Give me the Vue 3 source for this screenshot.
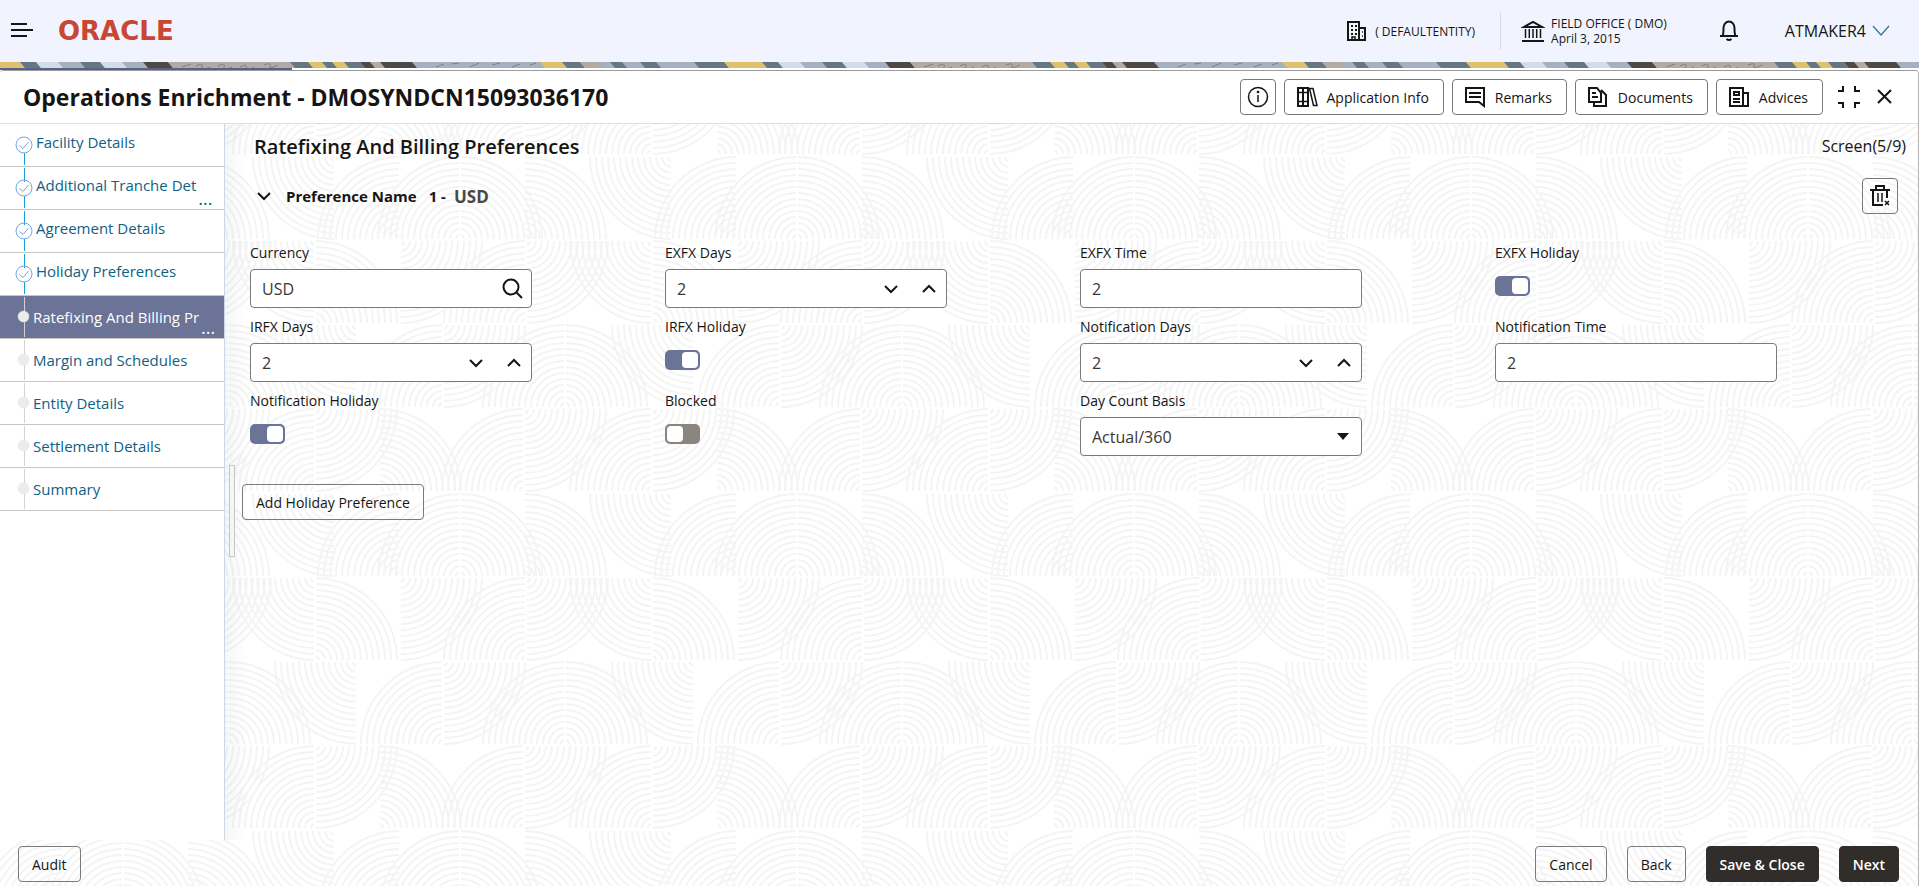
<template>
  <div class="app">
    <header class="topbar">
      <button class="icon-btn" aria-label="Menu">
        <svg width="24" height="24" viewBox="0 0 24 24"><path d="M1 5h16M1 11h22M1 17h16" stroke="#161513" stroke-width="2" /></svg>
      </button>
      <a href="#" class="logo">ORACLE</a>
      <div class="topbar-right">
        <div class="entity">
          <svg width="24" height="24" viewBox="0 0 24 24" fill="none" stroke="#161513" stroke-width="2">
            <path d="M3 21V3h11v18M14 9h6v12M2 21h19" />
            <path d="M6 7h2M10 7h2M6 11h2M10 11h2M6 15h2M10 15h2" />
            <path d="M7 21v-3h3v3M17 13h1M17 17h1" stroke-width="1.500" />
          </svg>
          <span>( DEFAULTENTITY)</span>
        </div>
        <div class="branch">
          <svg width="24" height="24" viewBox="0 0 24 24" fill="none" stroke="#161513">
            <path d="M3 8h18L12 3z" stroke-width="2" />
            <path d="M4.500 10v9M8.300 10v9M12 10v9M15.700 10v9M19.500 10v9" stroke-width="1.500" />
            <path d="M1 22h22" stroke-width="2" />
          </svg>
          <p>FIELD OFFICE ( DMO)<br>April 3, 2015</p>
        </div>
        <button class="icon-btn bell" aria-label="Notifications">
          <svg width="24" height="24" viewBox="0 0 24 24" fill="none" stroke="#161513" stroke-width="2">
            <path d="M3 17h18M5.500 17c1-2 1-4 1-8a5.500 6.500 0 0 1 11 0c0 4 0 6 1 8M9.500 20q2.500 2 5 0" />
          </svg>
        </button>
        <button class="user">
          ATMAKER4
          <svg width="18" height="12" viewBox="0 0 18 12"><path d="M1 1l8 9 8-9" fill="none" stroke="#2d7695" stroke-width="1.200" /></svg>
        </button>
      </div>
    </header>

    <svg class="strip" width="100%" height="12" aria-hidden="true">
      <defs>
        <pattern id="strip" width="742" height="12" patternUnits="userSpaceOnUse">
          <rect width="742" height="12" fill="#a5b1c0" />
          <polygon v-for="(s, i) in stripes" :key="i" :fill="s[2]" :points="`${s[0]},0 ${s[1]},0 ${s[1] + 10},12 ${s[0] + 10},12`" />
          <path d="M182 5l9-3M196 4q8-4 6 1t8 0M218 4q8-4 6 1t8 0M240 5q8-4 6 1t8-1M264 3q8-3 6 1t8-1M436 5l8-3M452 2l7-1M470 5l9-4M492 3l8-2M512 5l8-3M530 3l6-2" fill="none" stroke="#7e7f80" />
        </pattern>
      </defs>
      <rect width="100%" height="12" fill="url(#strip)" />
    </svg>

    <main class="panel">
      <div class="progress"></div>
      <div class="sheet">
        <svg class="waves" width="100%" height="100%" aria-hidden="true">
          <defs>
            <pattern id="waves" y="422" width="337" height="337" patternUnits="userSpaceOnUse">
              <path :d="wavePath" fill="none" stroke="#f4f4f4" stroke-width="2" />
            </pattern>
          </defs>
          <rect width="100%" height="100%" fill="url(#waves)" />
        </svg>

        <div class="sheet-head">
          <h1>Operations Enrichment - DMOSYNDCN15093036170</h1>
          <div class="actions">
            <button class="btn square" aria-label="Information">
              <svg width="24" height="24" viewBox="0 0 24 24" fill="none" stroke="#161513" stroke-width="1.500">
                <circle cx="12" cy="12" r="9.500" /><path d="M12 10v7" /><circle cx="12" cy="7" r=".6" />
              </svg>
            </button>
            <button v-for="a in actions" :key="a.label" class="btn with-icon">
              <svg width="24" height="24" viewBox="0 0 24 24" fill="none" stroke="#161513" stroke-width="2"><path :d="a.icon" /><path :d="a.thin" :stroke-width="a.thinWidth" /></svg>
              {{ a.label }}
            </button>
            <button class="icon-btn collapse" aria-label="Collapse">
              <svg width="24" height="24" viewBox="0 0 24 24" fill="none" stroke="#161513" stroke-width="2"><path d="M1 6h5V1M18 1v5h5M1 18h5v5M18 23v-5h5" /></svg>
            </button>
            <button class="icon-btn" aria-label="Close">
              <svg width="24" height="24" viewBox="0 0 24 24"><path d="M5 5l13 13M18 5L5 18" stroke="#161513" stroke-width="2" /></svg>
            </button>
          </div>
        </div>

        <div class="body">
          <nav class="steps">
            <a v-for="s in steps" :key="s.label" href="#" class="step" :class="s.state">
              <svg v-if="s.state === 'done'" width="18" height="42" viewBox="0 0 18 42" fill="none">
                <path :d="s.first ? 'M9.500 29v12' : 'M9.500 1v14M9.500 29v12'" stroke="#12a0d8" />
                <circle cx="9" cy="21" r="8" stroke="#74a5e4" />
                <path d="M4.500 21.500l3.500 3 5.500-6.500" stroke="#74a5e4" />
              </svg>
              <svg v-else width="18" height="42" viewBox="0 0 18 42">
                <path d="M9.500 1v40" stroke="#d2d2d2" />
                <circle cx="8.500" cy="20.500" r="5.500" fill="#ececec" stroke="#e2e2e2" stroke-width=".5" />
              </svg>
              <span class="step-label">{{ s.label }}</span>
              <span v-if="s.cut" class="dots">...</span>
            </a>
          </nav>

          <section class="content">
            <button class="splitter" aria-label="Resize"></button>
            <div class="content-head">
              <h2>Ratefixing And Billing Preferences</h2>
              <span class="screen">Screen(5/9)</span>
            </div>
            <div class="pref">
              <button class="icon-btn" aria-label="Toggle preference">
                <svg width="16" height="16" viewBox="0 0 16 16"><path d="M2 5l6 6 6-6" fill="none" stroke="#161513" stroke-width="2" /></svg>
              </button>
              <h3>Preference Name</h3>
              <span class="pref-no">1 -</span>
              <span class="pref-ccy">USD</span>
              <button class="btn square trash" aria-label="Delete">
                <svg width="24" height="24" viewBox="0 0 24 24" fill="none" stroke="#161513" stroke-width="2">
                  <path d="M2 6h20M8 6V2h8v4M5 6v15h10M19 6v8" />
                  <path d="M10 9v9M14 9v9" stroke-width="1.500" /><path d="M17 17l4 4M21 17l-4 4" stroke-width="1.500" />
                </svg>
              </button>
            </div>

            <form class="grid" @submit.prevent>
              <div v-for="f in fields" :key="f.id" class="field">
                <label :for="f.id">{{ f.label }}</label>
                <input v-if="f.type === 'switch'" :id="f.id" v-model="f.value" type="checkbox" class="switch">
                <div v-else class="control">
                  <select v-if="f.type === 'select'" :id="f.id" v-model="f.value">
                    <option>Actual/360</option>
                  </select>
                  <input v-else :id="f.id" v-model="f.value" type="text">
                  <button v-if="f.type === 'search'" type="button" class="icon-btn" aria-label="Search">
                    <svg width="24" height="24" viewBox="0 0 24 24" fill="none" stroke="#161513" stroke-width="2"><circle cx="11" cy="10" r="7.500" /><path d="M16 15l6 6" /></svg>
                  </button>
                  <template v-if="f.type === 'number'">
                    <button type="button" class="icon-btn spin" aria-label="Decrease" @click="f.value--">
                      <svg width="16" height="16" viewBox="0 0 16 16"><path d="M2 5l6 6 6-6" fill="none" stroke="#161513" stroke-width="2" /></svg>
                    </button>
                    <button type="button" class="icon-btn spin" aria-label="Increase" @click="f.value++">
                      <svg width="16" height="16" viewBox="0 0 16 16"><path d="M2 11l6-6 6 6" fill="none" stroke="#161513" stroke-width="2" /></svg>
                    </button>
                  </template>
                  <svg v-if="f.type === 'select'" class="caret" width="12" height="7" viewBox="0 0 12 7"><path d="M0 0h12L6 7z" fill="#161513" /></svg>
                </div>
              </div>
            </form>
            <button class="btn add">Add Holiday Preference</button>
          </section>
        </div>

        <footer class="footer">
          <button class="btn audit">Audit</button>
          <button class="btn">Cancel</button>
          <button class="btn">Back</button>
          <button class="btn dark">Save &amp; Close</button>
          <button class="btn dark">Next</button>
        </footer>
      </div>
    </main>
  </div>
</template>

<script setup>
import { ref } from 'vue'

const steps = [
  { label: 'Facility Details', state: 'done', first: true },
  { label: 'Additional Tranche Det', state: 'done', cut: true },
  { label: 'Agreement Details', state: 'done' },
  { label: 'Holiday Preferences', state: 'done' },
  { label: 'Ratefixing And Billing Pr', state: 'active', cut: true },
  { label: 'Margin and Schedules', state: 'todo' },
  { label: 'Entity Details', state: 'todo' },
  { label: 'Settlement Details', state: 'todo' },
  { label: 'Summary', state: 'todo' }
]

const actions = [
  { label: 'Application Info', icon: 'M3 3h10v18H3zM8 3v18', thin: 'M3 7.500h10M3 16.500h10M14.500 3.500h3.500l4 17h-3.500z', thinWidth: 1.5 },
  { label: 'Remarks', icon: 'M3 3h18v18l-5-4H3z', thin: 'M6 8h12M6 12h12', thinWidth: 2 },
  { label: 'Documents', icon: 'M3 3h8l4 5v9H3zM8 17v4h12V10l-5-5', thin: 'M6 8h4M6 12h6', thinWidth: 2 },
  { label: 'Advices', icon: 'M3 3h13v18H3zM16 8h5v13h-5', thin: 'M7 7h5v3h-5zM6 14h7M6 17h7', thinWidth: 2 }
]

const fields = ref([
  { id: 'currency', label: 'Currency', type: 'search', value: 'USD' },
  { id: 'exfxDays', label: 'EXFX Days', type: 'number', value: 2 },
  { id: 'exfxTime', label: 'EXFX Time', type: 'text', value: '2' },
  { id: 'exfxHoliday', label: 'EXFX Holiday', type: 'switch', value: true },
  { id: 'irfxDays', label: 'IRFX Days', type: 'number', value: 2 },
  { id: 'irfxHoliday', label: 'IRFX Holiday', type: 'switch', value: true },
  { id: 'notifDays', label: 'Notification Days', type: 'number', value: 2 },
  { id: 'notifTime', label: 'Notification Time', type: 'text', value: '2' },
  { id: 'notifHoliday', label: 'Notification Holiday', type: 'switch', value: true },
  { id: 'blocked', label: 'Blocked', type: 'switch', value: false },
  { id: 'dayCount', label: 'Day Count Basis', type: 'select', value: 'Actual/360' }
])

// from, to, colour
const stripes = [
  [-12, 20, '#dfc16b'], [20, 36, '#667783'], [36, 58, '#d3dcea'], [80, 100, '#667783'],
  [100, 122, '#d3dcea'], [143, 168, '#4f4945'], [168, 290, '#b3aaa3'], [290, 360, '#667783'],
  [308, 322, '#dfc16b'], [332, 344, '#dfc16b'], [360, 412, '#4f4945'], [370, 380, '#b3aaa3'],
  [540, 562, '#dfc16b'], [562, 580, '#667783'], [580, 600, '#b3aaa3'], [610, 622, '#667783'],
  [640, 656, '#667783'], [694, 724, '#667783'], [724, 742, '#dfc16b']
]

// quarter circles of the backdrop: centre x, row, horizontal side, arch or bowl
const quarters = [
  [63, 0, -1, 'arch'], [123, 0, -1, 'arch'], [123, 0, 1, 'arch'], [187, 0, 1, 'arch'], [335, 0, -1, 'bowl'],
  [315, 1, -1, 'bowl'], [315, 1, 1, 'arch'], [63, 1, 1, 'bowl'], [189, 1, -1, 'arch'], [189, 1, 1, 'bowl'],
  [228, 2, -1, 'arch'], [228, 2, 1, 'arch'], [20, 2, -1, 'bowl'], [106, 2, -1, 'arch'], [106, 2, 1, 'bowl'],
  [315, 3, -1, 'arch'], [315, 3, 1, 'bowl'], [42, 3, 1, 'arch'], [187, 3, -1, 'arch'], [187, 3, 1, 'bowl']
]

const wavePath = quarters.flatMap(([cx, row, side, kind]) => {
  const y = kind === 'arch' ? row * 84 + 83 : row * 84 + 1
  const dir = kind === 'arch' ? -1 : 1
  const sweep = side * dir > 0 ? 1 : 0
  const out = []
  for (const shift of [-337, 0, 337]) {
    for (let r = 4; r <= 82; r += 6) {
      const x = cx + shift
      out.push(`M${x + side * r} ${y}A${r} ${r} 0 0 ${sweep} ${x + side} ${y + dir * r}`)
    }
  }
  return out
}).join('')
</script>

<style>
body {
  margin: 0;
}
</style>

<style scoped>
.app {
  min-height: 100vh;
  display: flex;
  flex-direction: column;
  font-family: "Open Sans", "Noto Sans", sans-serif;
  font-size: 14px;
  color: #161513;
  background: #fff;
}
h1, h2, h3, p {
  margin: 0;
}
button, input, select {
  font: inherit;
  color: inherit;
}
a {
  text-decoration: none;
}
svg {
  display: block;
  flex: none;
}
.icon-btn {
  border: none;
  background: none;
  padding: 0;
  cursor: pointer;
}

.topbar {
  height: 62px;
  padding: 0 29px 0 10px;
  display: flex;
  align-items: center;
  background: #f1f4fe;
}
.logo {
  margin-left: 24px;
  font-family: "DejaVu Sans", sans-serif;
  font-size: 26px;
  font-weight: bold;
  color: #c74634;
}
.topbar-right {
  margin-left: auto;
  display: flex;
  align-items: center;
  font-size: 12px;
}
.entity, .branch {
  display: flex;
  align-items: center;
  gap: 6px;
}
.entity {
  height: 38px;
  padding-right: 25px;
  border-right: 1px solid #d6dae6;
}
.branch {
  padding-left: 20px;
  line-height: 15px;
}
.bell {
  margin-left: 50px;
}
.user {
  margin-left: 44px;
  padding: 0;
  border: none;
  background: none;
  display: flex;
  align-items: center;
  gap: 6px;
  font-size: 16px;
}

.strip {
  margin-bottom: -6px;
}
.panel {
  position: relative;
  flex: 1;
  display: flex;
  flex-direction: column;
  background: #fff;
}
.progress {
  width: 292px;
  height: 2px;
  background: #5a6190;
}
.sheet {
  position: relative;
  flex: 1;
  display: flex;
  flex-direction: column;
  border-top: 1px solid #9a9a9a;
  border-right: 1px solid #b4b4b4;
  border-radius: 4px 4px 0 0;
  overflow: hidden;
}
.waves {
  position: absolute;
  top: 0;
  left: 0;
}
.sheet-head {
  position: relative;
  display: flex;
  align-items: center;
  justify-content: space-between;
  height: 52px;
  padding: 0 21px 0 23px;
  border-bottom: 1px solid #dfdfdf;
  background: #fff;
}
h1 {
  font-size: 23px;
  font-weight: 700;
}
.actions {
  display: flex;
  align-items: center;
  gap: 8px;
}
.collapse {
  margin: 0 4px 0 6px;
}
.btn {
  height: 36px;
  padding: 0 13px;
  border: 1px solid #7c7977;
  border-radius: 4px;
  background: transparent;
  font-size: 14px;
  cursor: pointer;
}
.with-icon {
  display: flex;
  align-items: center;
  gap: 8px;
  padding: 0 14px 0 10px;
}
.square {
  width: 36px;
  padding: 0;
  display: flex;
  align-items: center;
  justify-content: center;
}

.body {
  position: relative;
  flex: 1;
  display: flex;
}
.steps {
  width: 224px;
  flex: none;
  border-right: 1px solid #ccd9e4;
  background: #fff;
}
.step {
  display: flex;
  align-items: center;
  height: 42px;
  padding-left: 15px;
  border-bottom: 1px solid #c9c7c3;
  color: #0f6184;
  font-size: 15px;
  line-height: 22px;
  white-space: nowrap;
}
.done .step-label {
  margin: 0 0 6px 3px;
}
.dots {
  align-self: flex-end;
  margin-left: 2px;
  font-size: 18px;
}
.step.active {
  background: #6b7396;
  color: #fff;
}

.content {
  position: relative;
  flex: 1;
  padding: 7px 8px 0 25px;
  background: linear-gradient(to right, rgba(0, 0, 0, 0.03), transparent 24px);
}
.splitter {
  position: absolute;
  left: 4px;
  top: 341px;
  width: 6px;
  height: 92px;
  padding: 0;
  border: 1px solid #c6c6c6;
  background: #f6f6f6;
}
.content-head {
  display: flex;
  align-items: center;
  justify-content: space-between;
  height: 30px;
  padding: 0 4px;
}
h2 {
  font-size: 20px;
  font-weight: 600;
}
.screen {
  font-size: 16px;
}
.pref {
  display: flex;
  align-items: center;
  height: 36px;
  margin-top: 17px;
  padding: 0 12px 0 6px;
}
h3 {
  margin-left: 14px;
  font-size: 15px;
  font-weight: 700;
}
.pref-no {
  margin-left: 12px;
  font-size: 15px;
  font-weight: 700;
}
.pref-ccy {
  margin-left: 8px;
  font-size: 17px;
  font-weight: 700;
  color: #4a4846;
}
.trash {
  margin-left: auto;
}
.grid {
  display: grid;
  grid-template-columns: repeat(4, 1fr);
  row-gap: 10px;
  margin-top: 30px;
}
.field {
  display: flex;
  flex-direction: column;
  align-items: flex-start;
  gap: 7px;
}
.field label {
  font-size: 14px;
  line-height: 18px;
}
.control {
  position: relative;
  box-sizing: border-box;
  width: 68%;
  height: 39px;
  padding: 0 7px 0 11px;
  display: flex;
  align-items: center;
  border: 1px solid #7c7977;
  border-radius: 4px;
  background: #fff;
}
.control input, .control select {
  flex: 1;
  min-width: 0;
  height: 100%;
  padding: 0;
  border: none;
  outline: none;
  background: none;
  appearance: none;
  font-size: 16px;
  color: #3a3836;
}
.spin {
  margin: 0 2px 0 20px;
}
.caret {
  position: absolute;
  right: 12px;
  top: 15px;
  pointer-events: none;
}
.switch {
  position: relative;
  width: 35px;
  height: 20px;
  margin: 7px 0 0;
  border-radius: 5px;
  background: #8b8580;
  appearance: none;
}
.switch::after {
  content: "";
  position: absolute;
  top: 2px;
  left: 2px;
  width: 16px;
  height: 16px;
  border-radius: 4px;
  background: #fff;
}
.switch:checked {
  background: #6b7396;
}
.switch:checked::after {
  left: 17px;
}
.add {
  margin: 28px 0 0 -8px;
}

.footer {
  position: relative;
  display: flex;
  align-items: center;
  gap: 20px;
  padding: 6px 19px 4px 18px;
}
.audit {
  margin-right: auto;
}
.dark {
  border-color: #312d2a;
  background: #312d2a;
  color: #fff;
  font-weight: 600;
}
</style>
